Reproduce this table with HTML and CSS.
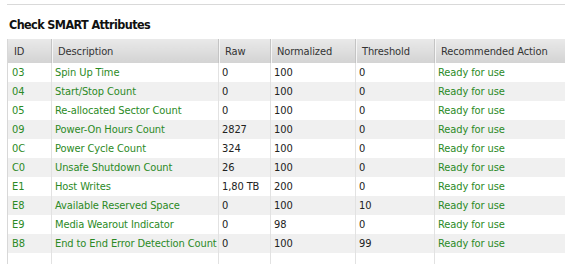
FILE: index.html
```html
<!DOCTYPE html>
<html>
<head>
<meta charset="utf-8">
<link rel="stylesheet" href="styles.css">
</head>
<body>
<div class="panel">
  <div class="rule"></div>
  <h2 class="title">Check SMART Attributes</h2>
  <table class="smart">
    <colgroup>
      <col class="c-id"><col class="c-desc"><col class="c-raw"><col class="c-norm"><col class="c-thr"><col class="c-act">
    </colgroup>
    <thead>
      <tr><th>ID</th><th>Description</th><th>Raw</th><th>Normalized</th><th>Threshold</th><th>Recommended Action</th></tr>
    </thead>
    <tbody>
      <tr><td class="g">03</td><td class="g">Spin Up Time</td><td>0</td><td>100</td><td>0</td><td class="g">Ready for use</td></tr>
      <tr><td class="g">04</td><td class="g">Start/Stop Count</td><td>0</td><td>100</td><td>0</td><td class="g">Ready for use</td></tr>
      <tr><td class="g">05</td><td class="g">Re-allocated Sector Count</td><td>0</td><td>100</td><td>0</td><td class="g">Ready for use</td></tr>
      <tr><td class="g">09</td><td class="g">Power-On Hours Count</td><td>2827</td><td>100</td><td>0</td><td class="g">Ready for use</td></tr>
      <tr><td class="g">0C</td><td class="g">Power Cycle Count</td><td>324</td><td>100</td><td>0</td><td class="g">Ready for use</td></tr>
      <tr><td class="g">C0</td><td class="g">Unsafe Shutdown Count</td><td>26</td><td>100</td><td>0</td><td class="g">Ready for use</td></tr>
      <tr><td class="g">E1</td><td class="g">Host Writes</td><td>1,80 TB</td><td>200</td><td>0</td><td class="g">Ready for use</td></tr>
      <tr><td class="g">E8</td><td class="g">Available Reserved Space</td><td>0</td><td>100</td><td>10</td><td class="g">Ready for use</td></tr>
      <tr><td class="g">E9</td><td class="g">Media Wearout Indicator</td><td>0</td><td>98</td><td>0</td><td class="g">Ready for use</td></tr>
      <tr><td class="g">B8</td><td class="g">End to End Error Detection Count</td><td>0</td><td>100</td><td>99</td><td class="g">Ready for use</td></tr>
      <tr class="empty"><td></td><td></td><td></td><td></td><td></td><td></td></tr>
    </tbody>
  </table>
</div>
</body>
</html>
```
FILE: styles.css
```css
html, body {
  margin: 0;
  padding: 0;
  background: #fff;
  overflow: hidden;
}
.panel {
  padding-left: 7px;
  font-family: "DejaVu Sans Condensed", "DejaVu Sans", Verdana, sans-serif;
  font-size: 11px;
  color: #222;
}
.rule {
  margin-top: 4px;
  height: 1px;
  background: #d9d9d9;
}
.title {
  margin: 0;
  padding: 12px 0 0 2px;
  height: 23px;
  box-sizing: border-box;
  font-size: 12.5px;
  line-height: 16px;
  font-weight: bold;
  color: #111;
  letter-spacing: -0.6px;
}
.smart {
  margin-top: 11px;
  width: 558px;
  table-layout: fixed;
  border-collapse: collapse;
  border-left: 1px solid #d8d8d8;
  letter-spacing: -0.1px;
}
.c-id { width: 44px; }
.c-desc { width: 167px; }
.c-raw { width: 52px; }
.c-norm { width: 85px; }
.c-thr { width: 79px; }
.c-act { width: 131px; }
.smart th {
  height: 22px;
  padding: 2px 0 0 6px;
  line-height: 14px;
  text-align: left;
  font-weight: normal;
  color: #333;
  background: linear-gradient(#e9e9e9, #d3d3d3);
  border-left: 1px solid #c4c4c4;
  box-shadow: inset 1px 0 0 #f6f6f6;
  white-space: nowrap;
  overflow: hidden;
}
.smart th:first-child {
  border-left: none;
  box-shadow: none;
}
.smart td {
  height: 18px;
  padding: 1px 0 0 3px;
  line-height: 14px;
  border-left: 1px solid #e2e2e2;
  white-space: nowrap;
  overflow: hidden;
}
.smart td:first-child {
  padding-left: 4px;
  border-left: none;
}
.smart tbody tr:nth-child(even) td {
  background: #f0f0f0;
}
.smart .g {
  color: #2b8a25;
}
.smart tr.empty td {
  height: 14px;
  background: #fff;
}
```
